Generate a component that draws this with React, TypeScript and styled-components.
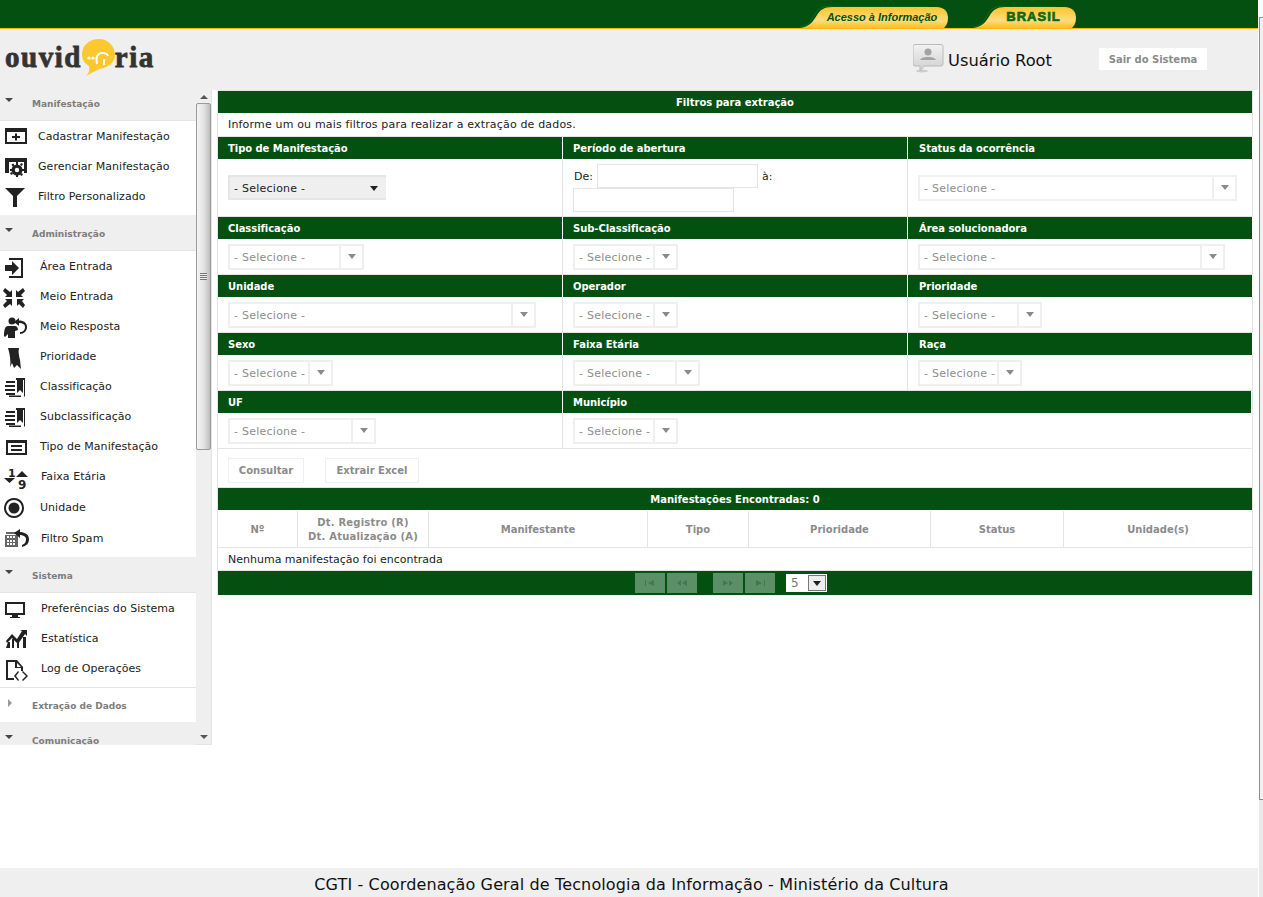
import React from 'react'
import styled, { createGlobalStyle } from 'styled-components'

const GREEN = '#035011'
const LINE = '#e4e4e4'
const BAND = '#efefef'

const GlobalStyle = createGlobalStyle`
  html, body {
    margin: 0;
    padding: 0;
    height: 897px;
    overflow: hidden;
    background: #fff;
    font-family: "DejaVu Sans", Verdana, sans-serif;
  }
  * {
    box-sizing: border-box;
  }
`

const Page = styled.div`
  display: flex;
  width: 1263px;
  height: 897px;
`

const Window = styled.div`
  width: 1258px;
  display: flex;
  flex-direction: column;
`

const PageScroll = styled.div`
  width: 4px;
  margin-left: 1px;
  display: flex;
  flex-direction: column;
  background: #e9e9e9;
`

const PageScrollTop = styled.div`
  height: 17px;
  background: #fff;
`

const PageScrollThumb = styled.div`
  height: 783px;
  background: #f1f1f1;
  border-left: 1px solid #8f8f8f;
  border-top: 1px solid #8f8f8f;
  border-bottom: 1px solid #8f8f8f;
`

const TopBar = styled.div`
  height: 29px;
  background: ${GREEN};
  border-bottom: 1px solid #fcb900;
  display: flex;
  align-items: flex-end;
  padding-left: 800px;
`

const Tab = styled.a<{ $w: number; $ml?: number }>`
  position: relative;
  width: ${({ $w }) => $w}px;
  height: 22px;
  margin-left: ${({ $ml }) => $ml || 0}px;
  display: flex;
  align-items: center;
  justify-content: center;
  padding-left: 16px;
  color: ${GREEN};
  svg {
    position: absolute;
    left: 0;
    top: 0;
  }
`

const TabText = styled.span`
  position: relative;
  font: italic bold 11px "Liberation Sans", Arial, sans-serif;
  margin-top: -1px;
`

const BrasilText = styled.span`
  position: relative;
  font: bold 13px "Liberation Sans", Arial, sans-serif;
  letter-spacing: 1px;
  color: #0b6b14;
  margin: -2px 0 0 2px;
  -webkit-text-stroke: 0.7px #0b6b14;
`

const Band = styled.div`
  height: 61px;
  background: ${BAND};
  display: flex;
  align-items: flex-start;
`

const Logo = styled.div`
  display: flex;
  align-items: center;
  width: 913px;
  padding: 9px 0 0 5px;
`

const LogoText = styled.span`
  font: bold 29px "Liberation Serif", serif;
  letter-spacing: 1.5px;
  color: #333;
  -webkit-text-stroke: 0.8px #333;
  line-height: 38px;
`

const UserIcon = styled.div`
  width: 31px;
  height: 30px;
  margin-top: 15px;
`

const UserName = styled.span`
  font: 16.3px/20px "DejaVu Sans", Verdana, sans-serif;
  color: #111;
  margin: 22px 0 0 4px;
  width: 151px;
`

const LogoutButton = styled.a`
  width: 108px;
  height: 22px;
  margin-top: 19px;
  background: #fff;
  color: #8b8b8b;
  font-size: 10px;
  font-weight: bold;
  line-height: 24px;
  text-align: center;
`

const Body = styled.div`
  height: 778px;
  display: flex;
  align-items: flex-start;
  background: #fff;
`

const SideWrap = styled.div`
  width: 212px;
  height: 655px;
  display: flex;
`

const Sidebar = styled.nav`
  width: 196px;
  height: 655px;
  overflow: hidden;
  background: #fff;
`

const SideInner = styled.div`
  margin-top: -5px;
`

const SectionHead = styled.div<{ $open?: boolean }>`
  height: ${({ $open }) => ($open ? 36 : 35)}px;
  background: ${({ $open }) => ($open ? BAND : '#fff')};
  ${({ $open }) => ($open ? `border-bottom: 1px solid ${LINE};` : `border-top: 1px solid ${LINE};`)}
  display: flex;
  align-items: center;
  font-size: 9px;
  font-weight: bold;
  color: #7d7d7d;
  position: relative;
  padding: 2px 0 0 32px;
`

const Caret = styled.i<{ $open?: boolean }>`
  position: absolute;
  left: ${({ $open }) => ($open ? 5 : 8)}px;
  top: ${({ $open }) => ($open ? 13 : 11)}px;
  width: 0;
  height: 0;
  ${({ $open }) =>
    $open
      ? `border-left: 4px solid transparent;
         border-right: 4px solid transparent;
         border-top: 4px solid #444;`
      : `border-top: 4px solid transparent;
         border-bottom: 4px solid transparent;
         border-left: 4px solid #999;`}
`

const SectionBody = styled.div`
  padding-bottom: 4px;
`

const Item = styled.a<{ $x: number; $h?: number }>`
  display: flex;
  align-items: center;
  height: ${({ $h }) => $h || 30}px;
  font-size: 11px;
  letter-spacing: 0.05px;
  color: #222;
  position: relative;
  padding-left: ${({ $x }) => $x}px;
  padding-top: ${({ $h }) => ($h ? 2 : 0)}px;
  svg {
    position: absolute;
    left: 3px;
    top: 4px;
    overflow: visible;
  }
`

const Rail = styled.div`
  width: 16px;
  height: 655px;
  background: ${BAND};
  border-right: 1px solid ${LINE};
  border-bottom: 1px solid ${LINE};
  display: flex;
  flex-direction: column;
  align-items: center;
`

const RailArrow = styled.i<{ $up?: boolean }>`
  width: 0;
  height: 0;
  margin: 5px 0 4px;
  border-left: 4px solid transparent;
  border-right: 4px solid transparent;
  ${({ $up }) => ($up ? 'border-bottom: 4px solid #555;' : 'border-top: 4px solid #555; margin-bottom: 5px;')}
`

const RailThumb = styled.div`
  width: 15px;
  height: 347px;
  border: 1px solid #9a9a9a;
  border-radius: 2px;
  background: linear-gradient(to right, #f4f4f4, #e2e2e2 55%, #bdbdbd);
  display: flex;
  align-items: center;
  justify-content: center;
`

const RailGrip = styled.div`
  width: 7px;
  height: 7px;
  background: repeating-linear-gradient(to bottom, #777 0, #777 1px, #eee 1px, #eee 2px);
`

const RailFill = styled.div`
  flex: 1;
`

const Main = styled.main`
  width: 1036px;
  margin-left: 5px;
  border: 1px solid ${LINE};
  border-bottom: 0;
  background: #fff;
`

const BarTitle = styled.div`
  height: 22px;
  background: ${GREEN};
  color: #fff;
  font-size: 10px;
  font-weight: bold;
  line-height: 23px;
  text-align: center;
`

const Intro = styled.div`
  height: 24px;
  padding-left: 10px;
  border-bottom: 1px solid ${LINE};
  font-size: 11px;
  letter-spacing: 0.17px;
  line-height: 24px;
  color: #222;
`

const FilterGrid = styled.div`
  display: grid;
  grid-template-columns: 345px 345px 344px;
`

const Field = styled.div<{ $h: number; $wide?: boolean }>`
  height: ${({ $h }) => $h}px;
  border-right: 1px solid ${({ $wide }) => ($wide ? 'transparent' : LINE)};
  border-bottom: 1px solid ${LINE};
  display: flex;
  flex-direction: column;
  ${({ $wide }) => ($wide ? 'grid-column: span 2;' : '')}
  &:nth-child(3n) {
    border-right: 0;
    > :first-child {
      padding-left: 11px;
    }
  }
`

const FieldTitle = styled.div`
  height: 22px;
  flex: none;
  background: ${GREEN};
  color: #fff;
  font-size: 10px;
  letter-spacing: -0.05px;
  font-weight: bold;
  line-height: 23px;
  padding-left: 10px;
  box-shadow: 1px 0 0 #fff;
`

const FieldBody = styled.div`
  flex: 1;
  display: flex;
  align-items: center;
  padding: 0 0 0 10px;
`

const PeriodBody = styled.div`
  flex: 1;
  display: flex;
  flex-wrap: wrap;
  align-items: center;
  align-content: flex-start;
  padding: 5px 0 0 10px;
  width: 230px;
  font-size: 11px;
  color: #222;
`

const PeriodLabel = styled.span<{ $w: number }>`
  width: ${({ $w }) => $w}px;
  margin-left: ${({ $w }) => ($w < 20 ? 4 : 1)}px;
`

const DateInput = styled.div`
  width: 161px;
  height: 24px;
  border: 1px solid ${LINE};
  background: #fff;
`

const PeriodBreak = styled.div`
  flex-basis: 100%;
  height: 0;
`

const SelectBox = styled.div<{ $w: number }>`
  width: ${({ $w }) => $w}px;
  height: 26px;
  border: 2px solid ${BAND};
  display: flex;
  background: #fff;
`

const SelectLabel = styled.div`
  flex: 1;
  border-right: 2px solid ${BAND};
  padding-left: 4px;
  font-size: 11px;
  letter-spacing: 0.25px;
  line-height: 24px;
  color: #8e8e8e;
  white-space: nowrap;
  overflow: hidden;
`

const SelectArrow = styled.div`
  width: 21px;
  display: flex;
  align-items: center;
  justify-content: center;
`

const ArrowDown = styled.i<{ $dark?: boolean }>`
  width: 0;
  height: 0;
  border-left: 4px solid transparent;
  border-right: 4px solid transparent;
  border-top: 5px solid ${({ $dark }) => ($dark ? '#222' : '#8a8a8a')};
`

const PlainSelect = styled.div`
  width: 158px;
  height: 25px;
  background: ${BAND};
  border-top: 2px solid #e6e6e6;
  border-bottom: 2px solid #e6e6e6;
  border-left: 2px solid #e6e6e6;
  display: flex;
  align-items: center;
  justify-content: space-between;
  padding: 1px 8px 0 4px;
  font-size: 11px;
  letter-spacing: 0.25px;
  color: #222;
`

const ButtonRow = styled.div`
  height: 39px;
  border-bottom: 1px solid ${LINE};
  padding: 9px 0 0 10px;
  display: flex;
  gap: 21px;
`

const ActionButton = styled.button<{ $w: number }>`
  width: ${({ $w }) => $w}px;
  height: 25px;
  padding: 0;
  border: 1px solid ${BAND};
  background: #fff;
  color: #8b8b8b;
  font: bold 10px "DejaVu Sans", Verdana, sans-serif;
`

const TableHead = styled.div`
  display: grid;
  grid-template-columns: 80px 131px 219px 101px 182px 133px 188px;
  height: 38px;
  border-bottom: 1px solid ${LINE};
  border-top: 1px solid #fff;
`

const HeadCell = styled.div`
  display: flex;
  align-items: center;
  justify-content: center;
  text-align: center;
  border-right: 1px solid ${LINE};
  color: #8b8b8b;
  font-size: 10px;
  font-weight: bold;
  line-height: 14px;
  padding-top: 2px;
  &:nth-child(2) {
    letter-spacing: 0.2px;
  }
  &:last-child {
    border-right: 0;
  }
`

const EmptyRow = styled.div`
  height: 23px;
  padding-left: 10px;
  border-bottom: 1px solid ${LINE};
  font-size: 11px;
  line-height: 23px;
  color: #222;
`

const Pager = styled.div`
  height: 24px;
  background: ${GREEN};
  display: flex;
  align-items: center;
  padding-left: 417px;
`

const PageButton = styled.div<{ $gap?: number }>`
  width: 30px;
  height: 20px;
  margin-left: ${({ $gap }) => $gap || 0}px;
  background: #5b8f66;
  display: flex;
  align-items: center;
  justify-content: center;
`

const PageSize = styled.div`
  width: 41px;
  height: 18px;
  margin-left: 11px;
  background: #fff;
  display: flex;
  justify-content: space-between;
  padding-left: 5px;
  font-size: 12px;
  line-height: 18px;
  color: #777;
`

const PageSizeButton = styled.div`
  width: 18px;
  height: 16px;
  margin: 1px;
  border: 1px solid #777;
  background: #eee;
  display: flex;
  align-items: center;
  justify-content: center;
`

const Footer = styled.footer`
  height: 29px;
  background: ${BAND};
  font-size: 16px;
  letter-spacing: 0.13px;
  line-height: 33px;
  text-align: center;
  color: #111;
  padding-left: 5px;
`

const Ink = styled.svg.attrs({ width: 24, height: 24, viewBox: '0 0 24 24' })`
  fill: #222;
`

const icons: Record<string, React.ReactNode> = {
  add: (
    <Ink>
      <path d="M2 3h22v16H2zM4 7v10h18V7z" fillRule="evenodd" />
      <path d="M12 8.500h2V11h3v2h-3v2.500h-2V13H9v-2h3z" />
    </Ink>
  ),
  gear: (
    <Ink>
      <path d="M2 3h22v15h-3V7H6v11H2z" />
      <g transform="translate(0,-1)">
        <circle cx="14" cy="16" r="5.500" />
        <path d="M13 8h2v3h-2zM13 21h2v2h-2zM7 15h2v2H7zM19 15h2v2h-2zM8.500 10.500l2-1 1 2-2 1zM17 20l2-1 1 2-2 1zM8 21l-1-2 2-1 1 2zM18 12l-1-2 2-1 1 2z" />
        <circle cx="14" cy="16" r="2.200" fill="#fff" />
      </g>
    </Ink>
  ),
  funnel: (
    <Ink>
      <path d="M2 3h20l-8 8v11h-4V11z" />
    </Ink>
  ),
  signin: (
    <Ink>
      <path d="M6 3h14v20H6v-2h12V5H6z" />
      <path d="M2 10h7V6l7 7-7 7v-4H2z" />
    </Ink>
  ),
  compress: (
    <Ink>
      <path
        transform="translate(-1,1)"
        d="M3 2l5 4 2-2v7H3l2-2-4-4zM21 2l2 3-4 4 2 2h-7V4l2 2zM3 22l-2-3 4-4-2-2h7v7l-2-2zM21 22l-4-4-2 2v-7h7l-2 2 3 4z"
      />
    </Ink>
  ),
  reply: (
    <Ink>
      <g transform="translate(0,1)">
        <circle cx="9" cy="5" r="3.500" />
        <path d="M1 20c0-6 1-10 4-10h7c2 0 3 2 3 4l-3 1v7H5v-4l-3 3z" />
        <path d="M16 2v2.500c5 0 8 2.500 8 6.500s-3 7-7 7v-2c3 0 5-2 5-5s-3-4-6-4v3l-5-4z" />
      </g>
    </Ink>
  ),
  bookmark: (
    <Ink>
      <path transform="translate(-2,2)" d="M7 1h11c-1 4 0 8 1 12l1 9-4-4-3 3-2-5-2 4c1-6 0-12-2-19z" />
    </Ink>
  ),
  book: (
    <Ink>
      <path d="M13 3h9v19l-1-1V5h-8z" />
      <path d="M14 4h6v14l-3-3-3 3z" />
      <path d="M3 6h9v2H3zM2 10h10v2H2zM2 14h10v2H2zM3 18h9v2H3zM6 20.500h12v1.500H6z" />
    </Ink>
  ),
  form: (
    <Ink>
      <path d="M3 5h21v3H3zM3 5h2v15H3zM22 5h2v15h-2zM3 18h21v2H3z" />
      <path d="M8 10h11v2H8zM8 14h11v2H8z" />
    </Ink>
  ),
  sortNum: (
    <Ink>
      <text x="5" y="12" fontSize="11" fontWeight="bold" fontFamily="DejaVu Sans">
        1
      </text>
      <text x="15" y="24" fontSize="12" fontWeight="bold" fontFamily="DejaVu Sans">
        9
      </text>
      <path d="M13 12l6-6 6 6zM1 13h11l-5.500 5z" />
    </Ink>
  ),
  target: (
    <Ink>
      <path d="M11 3a10 10 0 1 0 .01 0zM11 5a8 8 0 1 1-.01 0z" fillRule="evenodd" />
      <circle cx="11" cy="13" r="5.500" />
    </Ink>
  ),
  spam: (
    <Ink>
      <path d="M3 6h11v2H3zM2 9h13v12H2z" fill="#666" />
      <path
        d="M4 10v2h2v-2zM7 10v2h2v-2zM10 10v2h2v-2zM4 14v2h2v-2zM7 14v2h2v-2zM10 14v2h2v-2zM4 17v2h2v-2zM7 17v2h2v-2zM10 17v2h2v-2z"
        fill="#fff"
      />
      <path d="M17 3v3c4 0 9 2 9 7s-3 7-7 8v-2c3-1 4-3 4-6s-4-4-6-4v3l-6-5z" />
    </Ink>
  ),
  monitor: (
    <Ink>
      <path d="M2 5h20v13H2zM4 7v9h16V7z" fillRule="evenodd" />
      <path d="M9 18h6v2h2v1H7v-1h2z" />
    </Ink>
  ),
  chart: (
    <Ink>
      <path d="M3 21l2-6h2v6zM9 21v-9h2v9zM14 21v-7h2v7zM20 21V10h3v11z" />
      <path d="M3 14l6-7 5 5 5-8-2-1h7v6l-2-2-7 10-6-6-5 5z" />
    </Ink>
  ),
  fileCode: (
    <Ink>
      <path d="M3 3h11l6 7v4h-2v-3h-6V5H5v16h6v2H3zM14 6v4h4z" fillRule="evenodd" />
      <path d="M15 14l1 1-3 4 3 4-1 1-4-5zM20 14l5 5-5 5-1-1 4-4-4-4z" />
    </Ink>
  ),
}

type MenuItem = { label: string; icon: string; x: number; h?: number }
type MenuSection = { title: string; open: boolean; items: MenuItem[] }

const menu: MenuSection[] = [
  {
    title: 'Manifestação',
    open: true,
    items: [
      { label: 'Cadastrar Manifestação', icon: 'add', x: 38 },
      { label: 'Gerenciar Manifestação', icon: 'gear', x: 38 },
      { label: 'Filtro Personalizado', icon: 'funnel', x: 38 },
    ],
  },
  {
    title: 'Administração',
    open: true,
    items: [
      { label: 'Área Entrada', icon: 'signin', x: 40 },
      { label: 'Meio Entrada', icon: 'compress', x: 40 },
      { label: 'Meio Resposta', icon: 'reply', x: 40 },
      { label: 'Prioridade', icon: 'bookmark', x: 40 },
      { label: 'Classificação', icon: 'book', x: 40 },
      { label: 'Subclassificação', icon: 'book', x: 40 },
      { label: 'Tipo de Manifestação', icon: 'form', x: 40 },
      { label: 'Faixa Etária', icon: 'sortNum', x: 41 },
      { label: 'Unidade', icon: 'target', x: 40, h: 31 },
      { label: 'Filtro Spam', icon: 'spam', x: 41, h: 31 },
    ],
  },
  {
    title: 'Sistema',
    open: true,
    items: [
      { label: 'Preferências do Sistema', icon: 'monitor', x: 41 },
      { label: 'Estatística', icon: 'chart', x: 41 },
      { label: 'Log de Operações', icon: 'fileCode', x: 41 },
    ],
  },
  { title: 'Extração de Dados', open: false, items: [] },
  { title: 'Comunicação', open: true, items: [] },
]

const columns = ['Nº', 'Dt. Registro (R)|Dt. Atualização (A)', 'Manifestante', 'Tipo', 'Prioridade', 'Status', 'Unidade(s)']

const Select = ({ width }: { width: number }) => (
  <SelectBox $w={width}>
    <SelectLabel>- Selecione -</SelectLabel>
    <SelectArrow>
      <ArrowDown />
    </SelectArrow>
  </SelectBox>
)

const Filter = ({ title, h, width, wide }: { title: string; h: number; width: number; wide?: boolean }) => (
  <Field $h={h} $wide={wide}>
    <FieldTitle>{title}</FieldTitle>
    <FieldBody>
      <Select width={width} />
    </FieldBody>
  </Field>
)

const TabShape = ({ w, id }: { w: number; id: string }) => (
  <svg width={w} height={22} viewBox={`0 0 ${w} 22`}>
    <defs>
      <linearGradient id={id} x1="0" y1="0" x2="0" y2="1">
        <stop offset="0" stopColor="#ffc428" />
        <stop offset="0.65" stopColor="#ffdc80" />
        <stop offset="1" stopColor="#ffbe1e" />
      </linearGradient>
    </defs>
    <path
      d={`M0 22C9 21 13 16 17 9C20 4 24 1 32 1H${w - 12}C${w - 3} 1 ${w} 6 ${w} 12C${w} 17 ${w - 2} 20 ${w - 4} 22Z`}
      fill={`url(#${id})`}
    />
    <path d={`M0 21C8 20 11 15 15 8C18 3 22 0 32 0H${w - 20}`} fill="none" stroke="#0d6b1c" />
  </svg>
)

const PagerGlyph = ({ d }: { d: string }) => (
  <svg width="12" height="8" viewBox="0 0 12 8" fill="#3f7a4c">
    <path d={d} />
  </svg>
)

export default function App() {
  return (
    <Page>
      <GlobalStyle />
      <Window>
        <TopBar>
          <Tab $w={148}>
            <TabShape w={148} id="tabFillA" />
            <TabText>Acesso à Informação</TabText>
          </Tab>
          <Tab $w={103} $ml={25}>
            <TabShape w={103} id="tabFillB" />
            <BrasilText>BRASIL</BrasilText>
          </Tab>
        </TopBar>
        <Band>
          <Logo>
            <LogoText>ouvid</LogoText>
            <svg width="33" height="37" viewBox="0 0 33 37">
              <path
                d="M17 0C26 0 33 7 33 16C33 25 24 29 17 30L4 37C7 34 8 31 7 27C2 24 0 20 0 15C0 6 8 0 17 0Z"
                fill="#fdc82f"
              />
              <circle cx="7" cy="19" r="1.600" fill="#fff" />
              <circle cx="11" cy="19" r="1.600" fill="#fff" />
              <path d="M15 25c-1-5 0-9 2-10 3-2 8-1 9 2" fill="none" stroke="#fff" strokeWidth="2" />
              <path d="M22 20v6" stroke="#fff" strokeWidth="2" />
            </svg>
            <LogoText>ria</LogoText>
          </Logo>
          <UserIcon>
            <svg width="31" height="30" viewBox="0 0 31 30">
              <defs>
                <linearGradient id="userFill" x1="0" y1="0" x2="0" y2="1">
                  <stop offset="0" stopColor="#f2f2f2" />
                  <stop offset="1" stopColor="#cfcfcf" />
                </linearGradient>
              </defs>
              <ellipse cx="9" cy="27" rx="6" ry="1.500" fill="#ccc" />
              <path
                d="M2 0.500H28a2 2 0 0 1 2 2V20a2 2 0 0 1-2 2H11L7 27V22H2a2 2 0 0 1-2-2V2.500a2 2 0 0 1 2-2Z"
                fill="url(#userFill)"
                stroke="#bbb"
              />
              <circle cx="15" cy="8" r="3.500" fill="#a3a3a3" />
              <path d="M7 16c2-3 5-3 8-3s6 0 8 3z" fill="#a3a3a3" />
            </svg>
          </UserIcon>
          <UserName>Usuário Root</UserName>
          <LogoutButton>Sair do Sistema</LogoutButton>
        </Band>
        <Body>
          <SideWrap>
            <Sidebar>
              <SideInner>
                {menu.map((section) => (
                  <div key={section.title}>
                    <SectionHead $open={section.open}>
                      <Caret $open={section.open} />
                      {section.title}
                    </SectionHead>
                    {section.items.length > 0 && (
                      <SectionBody>
                        {section.items.map((item) => (
                          <Item key={item.label} $x={item.x} $h={item.h}>
                            {icons[item.icon]}
                            {item.label}
                          </Item>
                        ))}
                      </SectionBody>
                    )}
                  </div>
                ))}
              </SideInner>
            </Sidebar>
            <Rail>
              <RailArrow $up />
              <RailThumb>
                <RailGrip />
              </RailThumb>
              <RailFill />
              <RailArrow />
            </Rail>
          </SideWrap>
          <Main>
            <BarTitle>Filtros para extração</BarTitle>
            <Intro>Informe um ou mais filtros para realizar a extração de dados.</Intro>
            <FilterGrid>
              <Field $h={80}>
                <FieldTitle>Tipo de Manifestação</FieldTitle>
                <FieldBody>
                  <PlainSelect>
                    - Selecione -
                    <ArrowDown $dark />
                  </PlainSelect>
                </FieldBody>
              </Field>
              <Field $h={80}>
                <FieldTitle>Período de abertura</FieldTitle>
                <PeriodBody>
                  <PeriodLabel $w={23}>De:</PeriodLabel>
                  <DateInput />
                  <PeriodLabel $w={14}>à:</PeriodLabel>
                  <PeriodBreak />
                  <DateInput />
                </PeriodBody>
              </Field>
              <Filter title="Status da ocorrência" h={80} width={319} />
              <Filter title="Classificação" h={58} width={136} />
              <Filter title="Sub-Classificação" h={58} width={105} />
              <Filter title="Área solucionadora" h={58} width={307} />
              <Filter title="Unidade" h={58} width={308} />
              <Filter title="Operador" h={58} width={105} />
              <Filter title="Prioridade" h={58} width={124} />
              <Filter title="Sexo" h={58} width={105} />
              <Filter title="Faixa Etária" h={58} width={127} />
              <Filter title="Raça" h={58} width={104} />
              <Filter title="UF" h={58} width={148} />
              <Filter title="Município" h={58} width={105} wide />
            </FilterGrid>
            <ButtonRow>
              <ActionButton $w={76}>Consultar</ActionButton>
              <ActionButton $w={94}>Extrair Excel</ActionButton>
            </ButtonRow>
            <BarTitle>Manifestações Encontradas: 0</BarTitle>
            <TableHead>
              {columns.map((column) => (
                <HeadCell key={column}>
                  <div>
                    {column.split('|').map((line) => (
                      <div key={line}>{line}</div>
                    ))}
                  </div>
                </HeadCell>
              ))}
            </TableHead>
            <EmptyRow>Nenhuma manifestação foi encontrada</EmptyRow>
            <Pager>
              <PageButton>
                <PagerGlyph d="M1 1h1v6H1zM10 1v6L4 4z" />
              </PageButton>
              <PageButton $gap={2}>
                <PagerGlyph d="M5 1v6L1 4zM11 1v6L6 4z" />
              </PageButton>
              <PageButton $gap={16}>
                <PagerGlyph d="M1 1v6l5-3zM7 1v6l4-3z" />
              </PageButton>
              <PageButton $gap={2}>
                <PagerGlyph d="M2 1v6l6-3zM10 1h1v6h-1z" />
              </PageButton>
              <PageSize>
                5
                <PageSizeButton>
                  <ArrowDown $dark />
                </PageSizeButton>
              </PageSize>
            </Pager>
          </Main>
        </Body>
        <Footer>CGTI - Coordenação Geral de Tecnologia da Informação - Ministério da Cultura</Footer>
      </Window>
      <PageScroll>
        <PageScrollTop />
        <PageScrollThumb />
      </PageScroll>
    </Page>
  )
}
